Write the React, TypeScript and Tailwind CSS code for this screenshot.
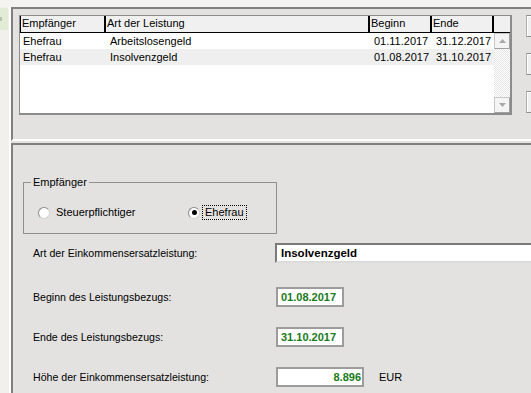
import React from "react";

const rows = [
  { who: "Ehefrau", art: "Arbeitslosengeld", von: "01.11.2017", bis: "31.12.2017" },
  { who: "Ehefrau", art: "Insolvenzgeld", von: "01.08.2017", bis: "31.10.2017" },
];

function ScrollButton({ dir }: { dir: "up" | "down" }) {
  return (
    <div className="grid h-[16px] w-[16px] place-items-center border border-[#c8c8c8] border-r-[#a0a0a0] border-b-[#a0a0a0] bg-[#f4f4f4]">
      <svg width="7" height="4" viewBox="0 0 7 4">
        {dir === "up" ? <path d="M0 4 L3.5 0 L7 4 Z" fill="#a8a8a8" /> : <path d="M0 0 L3.5 4 L7 0 Z" fill="#a8a8a8" />}
      </svg>
    </div>
  );
}

function Radio({ checked }: { checked?: boolean }) {
  return (
    <span className="grid h-[12px] w-[12px] shrink-0 place-items-center rounded-full border border-[#8a8a8a] border-b-[#d0d0d0] border-r-[#d0d0d0] bg-white">
      {checked && <span className="h-[5px] w-[5px] rounded-full bg-black" />}
    </span>
  );
}

function Field({ label, children, top }: { label: string; children: React.ReactNode; top: string }) {
  return (
    <div className={`flex h-[20px] items-center ${top}`}>
      <span className="w-[242px] shrink-0 text-[10.6px]">{label}</span>
      {children}
    </div>
  );
}

export default function App() {
  return (
    <div className="flex h-[393px] w-[531px] flex-col overflow-hidden bg-[#f4f3ef] font-['Liberation_Sans',Arial,sans-serif] text-[11px] leading-[13px] text-black">
      <div className="h-[7px] shrink-0" />
      <div className="flex min-h-0 flex-1">
        {/* left strip */}
        <div className="w-[11px] shrink-0 border-r-2 border-white bg-[#f1f0ec]">
          <div className="mt-[1px] flex h-[22px] w-[8px] items-center bg-[#e2ebd6]">
            <span className="h-[4px] w-[2px] bg-[#b8c0b0]" />
          </div>
        </div>

        <div className="flex min-w-0 flex-1 flex-col bg-[#e3e2e0]">
          {/* upper panel: list */}
          <div className="flex h-[134px] shrink-0 border-t-2 border-l-2 border-b-2 border-t-[#808080] border-l-[#808080] border-b-white pl-[6px] pt-[6px]">
            <div className="flex h-[100px] w-[493px] shrink-0 flex-col border-t border-l border-r-2 border-b-2 border-[#8c8c8c] bg-white">
              <div className="flex h-[17px] shrink-0 border-b border-black bg-[#f0f0f0]">
                <div className="w-[86px] border-l border-r-2 border-black pl-[1px] pt-[1px]">Empfänger</div>
                <div className="w-[264px] border-r-2 border-black pl-[1px] pt-[1px]">Art der Leistung</div>
                <div className="w-[62px] border-r-2 border-black pl-[1px] pt-[1px]">Beginn</div>
                <div className="w-[62px] border-r-2 border-black pl-[1px] pt-[1px]">Ende</div>
                <div className="w-[16px]" />
              </div>
              <div className="flex min-h-0 flex-1">
                <div className="flex flex-1 flex-col">
                  {rows.map((r, i) => (
                    <div key={i} className={`flex h-[16px] items-center ${i % 2 === 1 ? "bg-[#efefef]" : "bg-white"}`}>
                      <span className="w-[86px] pl-[3px]">{r.who}</span>
                      <span className="w-[264px] pl-[4px]">{r.art}</span>
                      <span className="w-[62px] pl-[4px]">{r.von}</span>
                      <span className="w-[62px] pl-[4px]">{r.bis}</span>
                    </div>
                  ))}
                </div>
                <div className="flex w-[16px] flex-col">
                  <ScrollButton dir="up" />
                  <div className="flex-1 bg-[repeating-conic-gradient(#e6e6e6_0_25%,#ffffff_0_50%)] bg-[length:2px_2px]" />
                  <ScrollButton dir="down" />
                </div>
              </div>
            </div>
            <div className="ml-[14px] flex flex-col gap-[16px]">
              {[0, 1, 2].map((k) => (
                <div key={k} className="h-[22px] w-[20px] border border-[#8e8e8e] border-l-[#b0b0b0] bg-[#efefef] shadow-[inset_1px_1px_0_#ffffff]" />
              ))}
            </div>
          </div>

          {/* lower panel: details */}
          <div className="mt-[2px] flex flex-1 flex-col border-t-2 border-l-2 border-[#808080]">
            <fieldset className="ml-[10px] mt-[31px] w-[254px] border border-[#8f8f8f] pb-[13px]">
              <legend className="ml-[7px] px-[2px] leading-[13px]">Empfänger</legend>
              <div className="mt-[16px] flex items-center">
                <div className="ml-[14px] flex w-[150px] items-center gap-[6px]">
                  <Radio />
                  <span>Steuerpflichtiger</span>
                </div>
                <div className="flex items-center gap-[2px]">
                  <Radio checked />
                  <span className="border border-dotted border-black px-[2px]">Ehefrau</span>
                </div>
              </div>
            </fieldset>

            <div className="flex flex-col pl-[20px]">
              <Field label="Art der Einkommensersatzleistung:" top="mt-[9px]">
                <div className="flex h-[20px] w-[270px] shrink-0 items-center border-t-2 border-l-2 border-b-2 border-t-[#7a7a7a] border-l-[#7a7a7a] border-b-[#dcdcdc] bg-white pl-[4px] text-[11.5px] font-bold">
                  Insolvenzgeld
                </div>
              </Field>
              <Field label="Beginn des Leistungsbezugs:" top="mt-[24px]">
                <div className="ml-[1px] flex h-[20px] w-[68px] items-center border-2 border-[#9c9c9c] bg-white pl-[3px] font-bold text-[#187a18]">
                  01.08.2017
                </div>
              </Field>
              <Field label="Ende des Leistungsbezugs:" top="mt-[20px]">
                <div className="ml-[1px] flex h-[20px] w-[68px] items-center border-2 border-[#9c9c9c] bg-white pl-[3px] font-bold text-[#187a18]">
                  31.10.2017
                </div>
              </Field>
              <Field label="Höhe der Einkommensersatzleistung:" top="mt-[20px]">
                <div className="ml-[1px] flex h-[20px] w-[88px] items-center justify-end border-2 border-[#9c9c9c] bg-white pr-[1px] font-bold text-[#187a18]">
                  8.896
                </div>
                <span className="ml-[15px]">EUR</span>
              </Field>
            </div>
          </div>
        </div>
      </div>
    </div>
  );
}
